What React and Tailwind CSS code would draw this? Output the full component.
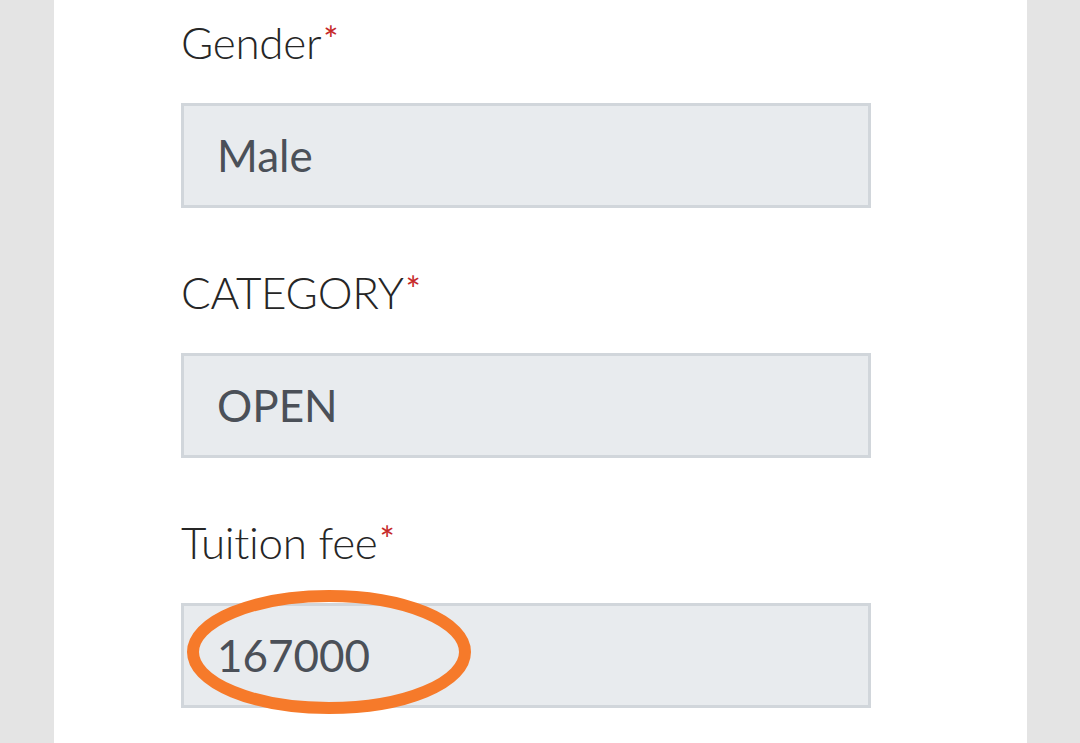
const fields = [
  { label: "Gender", value: "Male" },
  { label: "CATEGORY", value: "OPEN" },
  { label: "Tuition fee", value: "167000", circled: true },
];

const Field = ({ label, value, circled }) => {
  return (
    <div className="flex flex-col">
      <label className="text-[44px] leading-[55px] text-[#262626] font-['Lato',sans-serif] font-light tracking-[-0.3px]">
        {label}
        <span className="text-[#c62a2a] font-normal text-[36px] leading-none align-top relative top-[6px] ml-[2px]">*</span>
      </label>
      <div className="relative mt-[33px] w-[690px] h-[105px] border-[3px] border-[#d1d6db] bg-[#e8ebee] flex items-center pl-[33px]">
        <span className="text-[44px] leading-[1.2] text-[#4b5058] font-['Lato',sans-serif]">
          {value}
        </span>
        {circled && (
          <svg
            className="absolute left-[1px] top-[-18px] pointer-events-none"
            width="288"
            height="128"
            viewBox="0 0 288 128"
          >
            <ellipse
              cx="144"
              cy="64"
              rx="136"
              ry="56"
              fill="none"
              stroke="#f67a2a"
              strokeWidth="12"
            />
          </svg>
        )}
      </div>
    </div>
  );
};

const App = () => {
  return (
    <div className="h-screen overflow-hidden bg-[#e4e4e4]">
      <div className="ml-[54px] w-[973px] h-full bg-white pl-[127px] pt-[15px] flex flex-col gap-[57px]">
        {fields.map((f) => (
          <Field key={f.label} {...f} />
        ))}
      </div>
    </div>
  );
};

export default App;
